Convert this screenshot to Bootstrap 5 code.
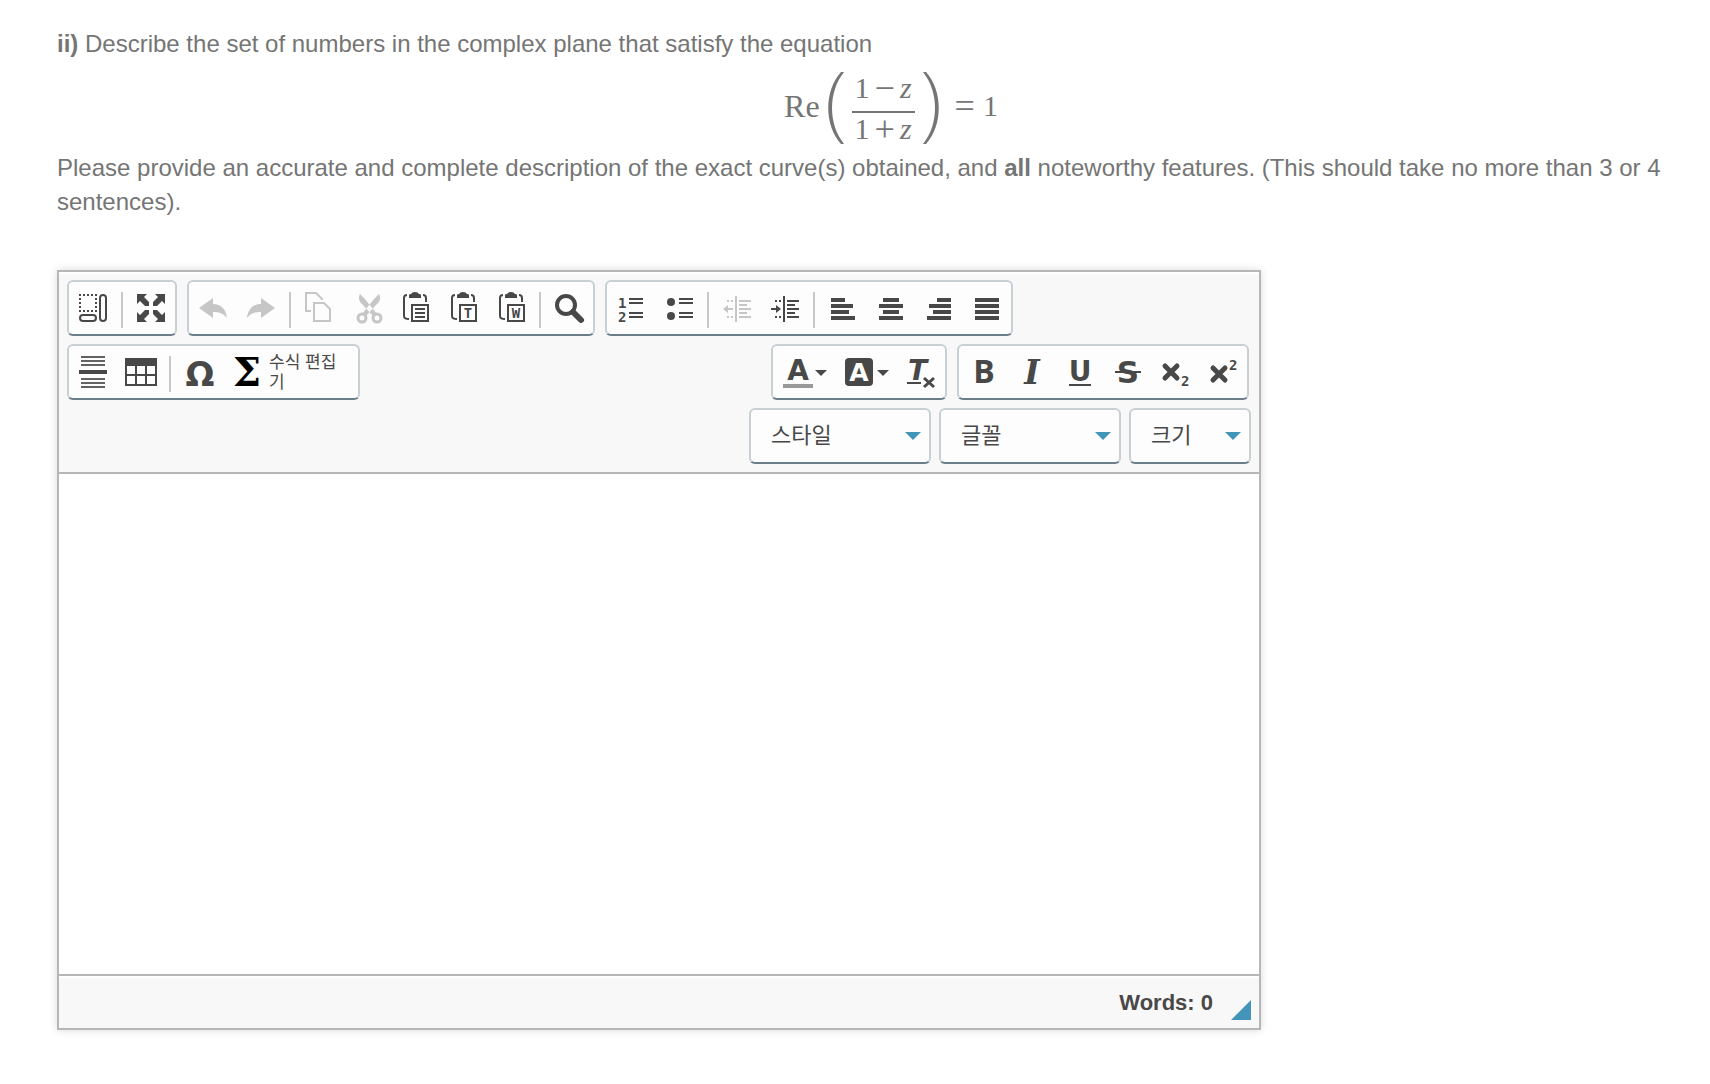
<!DOCTYPE html>
<html lang="ko">
<head>
<meta charset="utf-8">
<meta name="viewport" content="width=device-width, initial-scale=1">
<title>Question ii</title>
<link href="https://cdn.jsdelivr.net/npm/bootstrap@5.3.0/dist/css/bootstrap.min.css" rel="stylesheet">
<style>
body { background: #fff; color: #757575; font-family: "Liberation Sans", "Noto Sans CJK KR", sans-serif; font-size: 24px; line-height: 34px; }
.question { padding: 27px 28px 48px 57px; }
.formula { height: 90px; padding-left: 43px; font: 30px/40px "Liberation Serif", serif; }
.formula .func { font-size: 32px; }
.formula .op { font-size: 36px; }
.formula svg { margin-top: 4px; fill: #757575; }
.frac-part { gap: 5px; padding: 0 3px; }
.frac-top { border-bottom: 2px solid #757575; padding-bottom: 3px; }
.frac-bottom { line-height: 32px; }
.editor { max-width: 1204px; border: 2px solid #b6b6b6; box-shadow: 0 0 8px rgba(0,0,0,.15); margin-top: 51px; }
.toolbar { background: #f8f8f8; border-bottom: 2px solid #b6b6b6; border-top: 2px solid #fff; padding: 6px 8px 8px; gap: 8px; }
.tool-row { column-gap: 10px; }
.tool-row-split { padding-right: 2px; }
.tool-group { background: #fdfdfd; border: 2px solid #c8d0d4; border-bottom-color: #6a7f8a; border-radius: 6px; height: 56px; }
.tool-btn { height: 52px; padding: 0 8px; border: 0; border-radius: 0; color: #484848; }
.tool-btn svg { width: 32px; height: 32px; flex: none; fill: currentColor; overflow: visible; }
.tool-btn .arrow { width: 12px; height: 6px; margin: 2px 0 0 2px; }
.tool-btn:disabled { color: #c6c6c6; opacity: 1; border: 0; }
.tool-sep { width: 2px; height: 36px; margin: 10px 4px 0; background: #c8c8c8; }
.eq-label { font: 17px/20px "Noto Sans CJK KR", sans-serif; width: 74px; margin: 0 7px 2px 6px; word-break: break-all; }
.tool-btn .line-icon { fill: none; stroke: currentColor; stroke-width: 2; }
.line-icon text { fill: currentColor; stroke: none; }
.sans { font-family: "DejaVu Sans", sans-serif; font-weight: bold; }
.open { font-family: "Open Sans", sans-serif; font-weight: bold; }
.mono { font-family: "DejaVu Sans Mono", monospace; font-weight: bold; }
.serif { font-family: "DejaVu Serif", serif; font-weight: bold; }
.combo { width: 182px; height: 56px; padding: 0 36px 6px 20px; color: #484848; font: 22px/30px "Noto Sans CJK KR", sans-serif; background: #fdfdfd url("data:image/svg+xml,%3Csvg xmlns='http://www.w3.org/2000/svg' viewBox='0 0 16 8'%3E%3Cpath d='M0 0h16L8 8z' fill='%234295b8'/%3E%3C/svg%3E") no-repeat right 8px center / 16px 8px; border: 2px solid #c8d0d4; border-bottom-color: #6a7f8a; border-radius: 6px; }
.combo-sm { width: 122px; }
.answer { height: 500px; border: 0; resize: none; background: #fff; }
.statusbar { background: #f8f8f8; border-top: 2px solid #b6b6b6; box-shadow: inset 0 2px #fff; height: 54px; padding: 2px 8px 0; color: #484848; font-size: 22px; font-weight: bold; }
.grip { width: 20px; height: 20px; margin: 14px 0 0 18px; background: #4295b8; clip-path: polygon(100% 0, 100% 100%, 0 100%); }
</style>
<script src="https://cdn.jsdelivr.net/npm/bootstrap@5.3.0/dist/js/bootstrap.bundle.min.js"></script>
</head>
<body>
<main class="question">
  <p class="m-0"><strong>ii)</strong> Describe the set of numbers in the complex plane that satisfy the equation</p>
  <div class="formula d-flex justify-content-center align-items-center">
    <span class="func">Re</span>
    <svg class="ms-2" width="16" height="74" viewBox="0 0 16 74" aria-hidden="true"><path d="M16 1C0 21 0 53 16 73H13C-4 54-4 20 13 1z"/></svg>
    <span class="d-flex flex-column ms-2 me-2">
      <span class="frac-part frac-top d-flex"><span>1</span><span class="op">−</span><i>z</i></span>
      <span class="frac-part frac-bottom d-flex"><span>1</span><span class="op">+</span><i>z</i></span>
    </span>
    <svg width="16" height="74" viewBox="0 0 16 74" aria-hidden="true"><path d="M0 1C16 21 16 53 0 73H3C20 54 20 20 3 1z"/></svg>
    <span class="op ms-3">=</span><span class="ms-2">1</span>
  </div>
  <p class="m-0">Please provide an accurate and complete description of the exact curve(s) obtained, and <strong>all</strong> noteworthy features. (This should take no more than 3 or 4 sentences).</p>

  <section class="editor" aria-label="Editor">
    <div class="toolbar d-flex flex-column" role="toolbar">
      <div class="tool-row d-flex">
        <div class="tool-group d-flex">
          <button type="button" class="tool-btn btn d-flex align-items-center" aria-label="Show blocks"><svg class="line-icon" viewBox="0 0 32 32"><path d="M2 3h18M2 19h18M3 6v12M19 6v12" stroke-dasharray="2 2"/><rect x="3" y="23" width="16" height="6" rx="3"/><rect x="23" y="3" width="6" height="26" rx="3"/></svg></button>
          <span class="tool-sep"></span>
          <button type="button" class="tool-btn btn d-flex align-items-center" aria-label="Maximize"><svg viewBox="0 0 32 32"><path d="M2 2h10L9 5l5 5v4h-4l-5-5-3 3zM30 2H20l3 3-5 5v4h4l5-5 3 3zM2 30h10l-3-3 5-5v-4h-4l-5 5-3-3zM30 30H20l3-3-5-5v-4h4l5 5 3-3z"/></svg></button>
        </div>
        <div class="tool-group d-flex">
          <button type="button" disabled class="tool-btn btn d-flex align-items-center" aria-label="Undo"><svg viewBox="0 0 32 32"><path d="M2 16 16 6v6c8 0 13 5 14 14-4-5-8-6-14-6v6z"/></svg></button>
          <button type="button" disabled class="tool-btn btn d-flex align-items-center" aria-label="Redo"><svg viewBox="0 0 32 32"><path d="M30 16 16 6v6C8 12 3 17 2 26c4-5 8-6 14-6v6z"/></svg></button>
          <span class="tool-sep"></span>
          <button type="button" disabled class="tool-btn btn d-flex align-items-center" aria-label="Copy"><svg class="line-icon" viewBox="0 0 32 32"><path d="M8 19H3V1h10l6 6v1M11 11h10l6 6v12H11z"/></svg></button>
          <button type="button" disabled class="tool-btn btn d-flex align-items-center" aria-label="Cut"><svg viewBox="0 0 32 32"><path d="M9 2c-2 4-1 8 3 11l10 11 4-2L14 7zM28 2c2 4 1 8-3 11L15 24l-4-2L23 7z"/><g fill="none" stroke="currentColor" stroke-width="3"><circle cx="11" cy="26" r="4"/><circle cx="26" cy="26" r="4"/></g></svg></button>
          <button type="button" class="tool-btn btn d-flex align-items-center" aria-label="Paste"><svg class="line-icon" viewBox="0 0 32 32"><path d="M8 3C6 3 5 4 5 6v18c0 2 1 3 5 3M24 3c2 0 3 1 3 3v4M13 13h16v16H13zM16 17h10M16 21h10M16 25h10"/><path d="M10 6V3q0-1 2-1 1-2 4-2t4 2q2 0 2 1v3z" fill="currentColor" stroke="none"/></svg></button>
          <button type="button" class="tool-btn btn d-flex align-items-center" aria-label="Paste as plain text"><svg class="line-icon" viewBox="0 0 32 32"><path d="M8 3C6 3 5 4 5 6v18c0 2 1 3 5 3M24 3c2 0 3 1 3 3v4M13 13h16v16H13z"/><path d="M10 6V3q0-1 2-1 1-2 4-2t4 2q2 0 2 1v3z" fill="currentColor" stroke="none"/><text class="mono" x="21" y="26" text-anchor="middle" font-size="14">T</text></svg></button>
          <button type="button" class="tool-btn btn d-flex align-items-center" aria-label="Paste from Word"><svg class="line-icon" viewBox="0 0 32 32"><path d="M8 3C6 3 5 4 5 6v18c0 2 1 3 5 3M24 3c2 0 3 1 3 3v4M13 13h16v16H13z"/><path d="M10 6V3q0-1 2-1 1-2 4-2t4 2q2 0 2 1v3z" fill="currentColor" stroke="none"/><text class="mono" x="21" y="26" text-anchor="middle" font-size="14">W</text></svg></button>
          <span class="tool-sep"></span>
          <button type="button" class="tool-btn btn d-flex align-items-center" aria-label="Find"><svg class="line-icon" viewBox="0 0 32 32"><circle cx="13" cy="13" r="9" stroke-width="4"/><path d="m20 20 8 8" stroke-width="6" stroke-linecap="round"/></svg></button>
        </div>
        <div class="tool-group d-flex">
          <button type="button" class="tool-btn btn d-flex align-items-center" aria-label="Numbered list"><svg viewBox="0 0 32 32"><text class="mono" x="3" y="16" font-size="14">1</text><text class="mono" x="3" y="30" font-size="14">2</text><path d="M14 6h14v2H14zM14 10h14v2H14zM14 20h14v2H14zM14 24h14v2H14z"/></svg></button>
          <button type="button" class="tool-btn btn d-flex align-items-center" aria-label="Bulleted list"><svg viewBox="0 0 32 32"><circle cx="8" cy="10" r="4"/><circle cx="8" cy="24" r="4"/><path d="M16 6h14v2H16zM16 10h14v2H16zM16 20h14v2H16zM16 24h14v2H16z"/></svg></button>
          <span class="tool-sep"></span>
          <button type="button" disabled class="tool-btn btn d-flex align-items-center" aria-label="Decrease indent"><svg viewBox="0 0 32 32"><path d="M14 4h2v26h-2zM18 8h12v2H18zM18 12h8v2h-8zM18 16h12v2H18zM18 20h8v2h-8zM18 24h12v2H18zM6 8h2v2H6zM10 8h2v2h-2zM6 24h2v2H6zM10 24h2v2h-2zM2 17l5-4v3h5v2H7v3z"/></svg></button>
          <button type="button" class="tool-btn btn d-flex align-items-center" aria-label="Increase indent"><svg viewBox="0 0 32 32"><path d="M14 4h2v26h-2zM18 8h12v2H18zM18 12h8v2h-8zM18 16h12v2H18zM18 20h8v2h-8zM18 24h12v2H18zM6 8h2v2H6zM10 8h2v2h-2zM6 24h2v2H6zM10 24h2v2h-2zM12 17l-5-4v3H2v2h5v3z"/></svg></button>
          <span class="tool-sep"></span>
          <button type="button" class="tool-btn btn d-flex align-items-center" aria-label="Align left"><svg viewBox="0 0 32 32"><path d="M4 6h14v4H4zM4 12h22v4H4zM4 18h18v4H4zM4 24h24v4H4z"/></svg></button>
          <button type="button" class="tool-btn btn d-flex align-items-center" aria-label="Center"><svg viewBox="0 0 32 32"><path d="M8 6h16v4H8zM4 12h24v4H4zM8 18h16v4H8zM4 24h24v4H4z"/></svg></button>
          <button type="button" class="tool-btn btn d-flex align-items-center" aria-label="Align right"><svg viewBox="0 0 32 32"><path d="M14 6h14v4H14zM6 12h22v4H6zM10 18h18v4H10zM4 24h24v4H4z"/></svg></button>
          <button type="button" class="tool-btn btn d-flex align-items-center" aria-label="Justify"><svg viewBox="0 0 32 32"><path d="M4 6h24v4H4zM4 12h24v4H4zM4 18h24v4H4zM4 24h24v4H4z"/></svg></button>
        </div>
      </div>
      <div class="tool-row tool-row-split d-flex">
        <div class="tool-group d-flex me-auto">
          <button type="button" class="tool-btn btn d-flex align-items-center" aria-label="Horizontal line"><svg viewBox="0 0 32 32"><path d="M2 14h28v4H2z"/><path opacity=".85" d="M4 0h24v2H4zM4 4h24v2H4zM4 8h24v2H4zM4 22h24v2H4zM4 26h24v2H4zM4 30h24v2H4z"/></svg></button>
          <button type="button" class="tool-btn btn d-flex align-items-center" aria-label="Table"><svg viewBox="0 0 32 32"><path d="M0 2h32v8H0z"/><path d="M1 9v20h30V9M11 9v20M21 9v20M1 19h30" fill="none" stroke="currentColor" stroke-width="2"/></svg></button>
          <span class="tool-sep"></span>
          <button type="button" class="tool-btn btn d-flex align-items-center" aria-label="Special character"><svg viewBox="0 0 32 32"><text class="sans" x="17" y="30" text-anchor="middle" font-size="34">Ω</text></svg></button>
          <button type="button" class="tool-btn btn d-flex align-items-center"><svg viewBox="0 0 32 32"><text class="serif" x="16" y="30" text-anchor="middle" font-size="40" fill="#000">Σ</text></svg><span class="eq-label text-start">수식 편집기</span></button>
        </div>
        <div class="tool-group d-flex">
          <button type="button" class="tool-btn btn d-flex align-items-center" aria-label="Text color"><svg viewBox="0 0 32 32"><text class="sans" x="17" y="24" text-anchor="middle" font-size="28">A</text><path fill="#999" d="M2 28h30v4H2z"/></svg><svg class="arrow" viewBox="0 0 12 6"><path d="M0 0h12L6 6z"/></svg></button>
          <button type="button" class="tool-btn btn d-flex align-items-center" aria-label="Background color"><svg viewBox="0 0 32 32"><rect x="2" y="2" width="28" height="28" rx="4"/><text class="sans" x="16" y="25" text-anchor="middle" font-size="25" fill="#fff">A</text></svg><svg class="arrow" viewBox="0 0 12 6"><path d="M0 0h12L6 6z"/></svg></button>
          <button type="button" class="tool-btn btn d-flex align-items-center" aria-label="Remove format"><svg viewBox="0 0 32 32"><text class="sans" x="3" y="24" font-size="28" font-style="italic">T</text><path d="M2 26h14v2H2z"/><path d="m19 22 10 9M29 22l-10 9" stroke="currentColor" stroke-width="3"/></svg></button>
        </div>
        <div class="tool-group d-flex">
          <button type="button" class="tool-btn btn d-flex align-items-center" aria-label="Bold"><svg viewBox="0 0 32 32"><text class="open" x="17" y="27" text-anchor="middle" font-size="32">B</text></svg></button>
          <button type="button" class="tool-btn btn d-flex align-items-center" aria-label="Italic"><svg viewBox="0 0 32 32"><text class="serif" x="17" y="28" text-anchor="middle" font-size="33" font-style="italic">I</text></svg></button>
          <button type="button" class="tool-btn btn d-flex align-items-center" aria-label="Underline"><svg viewBox="0 0 32 32"><text class="sans" x="17" y="25" text-anchor="middle" font-size="28">U</text><path d="M6 28h22v2H6z"/></svg></button>
          <button type="button" class="tool-btn btn d-flex align-items-center" aria-label="Strikethrough"><svg viewBox="0 0 32 32"><text class="sans" x="17" y="27" text-anchor="middle" font-size="31">S</text><path d="M4 15h26v2H4z"/></svg></button>
          <button type="button" class="tool-btn btn d-flex align-items-center" aria-label="Subscript"><svg viewBox="0 0 32 32"><path d="m6 10 12 12M18 10 6 22" stroke="currentColor" stroke-width="5" stroke-linecap="round"/><text class="mono" x="22" y="30" font-size="14">2</text></svg></button>
          <button type="button" class="tool-btn btn d-flex align-items-center" aria-label="Superscript"><svg viewBox="0 0 32 32"><path d="m6 12 12 12M18 12 6 24" stroke="currentColor" stroke-width="5" stroke-linecap="round"/><text class="mono" x="22" y="14" font-size="14">2</text></svg></button>
        </div>
      </div>
      <div class="d-flex justify-content-end gap-2">
        <select class="combo form-select" aria-label="스타일"><option>스타일</option></select>
        <select class="combo form-select" aria-label="글꼴"><option>글꼴</option></select>
        <select class="combo combo-sm form-select" aria-label="크기"><option>크기</option></select>
      </div>
    </div>
    <textarea class="answer d-block w-100" aria-label="Answer"></textarea>
    <div class="statusbar d-flex justify-content-end align-items-center"><span>Words: 0</span><span class="grip"></span></div>
  </section>
</main>
</body>
</html>
